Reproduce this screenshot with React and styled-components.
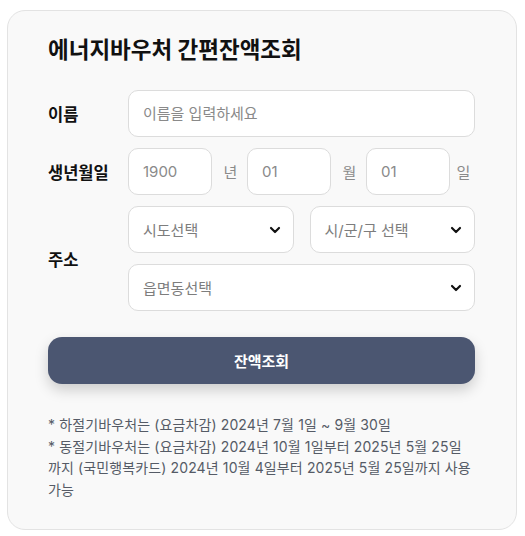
import styled, { createGlobalStyle } from "styled-components"
import { ChevronDown } from "lucide-react"

const GlobalStyle = createGlobalStyle`
body {
    margin: 0;
    background: #ffffff;
    font-family: Inter, "Noto Sans CJK KR", sans-serif;
}
`

const App = () => {
    return (
        <Page>
            <GlobalStyle />
            <Card>
                <Title>에너지바우처 간편잔액조회</Title>
                <Form>
                    <Row>
                        <Label>이름</Label>
                        <Input placeholder="이름을 입력하세요" />
                    </Row>
                    <Row>
                        <Label>생년월일</Label>
                        <DateGroup>
                            <Input placeholder="1900" />
                            <Unit>년</Unit>
                            <Input placeholder="01" />
                            <Unit>월</Unit>
                            <Input placeholder="01" />
                            <Unit>일</Unit>
                        </DateGroup>
                    </Row>
                    <Row>
                        <Label>주소</Label>
                        <AddressGrid>
                            <Select>
                                <span>시도선택</span>
                                <ChevronDown size={16} strokeWidth={3.2} color="#111" />
                            </Select>
                            <Select>
                                <span>시/군/구 선택</span>
                                <ChevronDown size={16} strokeWidth={3.2} color="#111" />
                            </Select>
                            <Select $wide>
                                <span>읍면동선택</span>
                                <ChevronDown size={16} strokeWidth={3.2} color="#111" />
                            </Select>
                        </AddressGrid>
                    </Row>
                </Form>
                <Button>잔액조회</Button>
                <Notes>
                    <p>* 하절기바우처는 (요금차감) 2024년 7월 1일 ~ 9월 30일</p>
                    <p>* 동절기바우처는 (요금차감) 2024년 10월 1일부터 2025년 5월 25일까지 (국민행복카드) 2024년 10월 4일부터 2025년 5월 25일까지 사용 가능</p>
                </Notes>
            </Card>
        </Page>
    )
}

const Page = styled.div`
padding: 10px 8px 7px 7px;
`
const Card = styled.div`
width: 510px;
box-sizing: border-box;
background-color: #f9f9f9;
border: 1px solid #e3e3e3;
border-radius: 18px;
padding: 24px 41px 29px 40px;
`
const Title = styled.h1`
margin: 0 0 25px;
font-size: 22.5px;
line-height: 30px;
font-weight: 700;
color: #111;
`
const Form = styled.div`
display: flex;
flex-direction: column;
gap: 11px;
`
const Row = styled.div`
display: grid;
grid-template-columns: 80px 1fr;
align-items: center;
`
const Label = styled.div`
font-size: 16.5px;
font-weight: 700;
color: #111;
`
const Input = styled.input`
width: 100%;
height: 47px;
box-sizing: border-box;
border: 1px solid #dcdcdc;
border-radius: 10px;
background: #fff;
padding: 0 14px;
font-family: inherit;
font-size: 15px;
outline: none;
&::placeholder {
    color: #8a8a8a;
}
`
const DateGroup = styled.div`
display: grid;
grid-template-columns: 84px 35px 84px 35px 84px 25px;
align-items: center;
`
const Unit = styled.span`
font-size: 15px;
color: #8a8a8a;
text-align: center;
padding-left: 2px;
`
const AddressGrid = styled.div`
display: grid;
grid-template-columns: 1fr 1fr;
gap: 11px 16px;
`
const Select = styled.div`
grid-column: ${(p) => (p.$wide ? "1 / span 2" : "auto")};
height: 47px;
box-sizing: border-box;
border: 1px solid #dcdcdc;
border-radius: 10px;
background: #fff;
padding: 0 10px 0 14px;
display: flex;
align-items: center;
justify-content: space-between;
font-size: 15px;
color: #7d7d7d;
`
const Button = styled.button`
display: block;
width: 100%;
height: 47px;
margin-top: 26px;
border: none;
border-radius: 14px;
background-color: #4b5671;
color: #fff;
font-family: inherit;
font-size: 15px;
font-weight: 700;
box-shadow: 0 6px 14px rgba(0, 0, 0, 0.18);
`
const Notes = styled.div`
margin-top: 30px;
padding-right: 2px;
font-size: 14px;
line-height: 21.5px;
letter-spacing: 0.12px;
color: #555b66;
p {
    margin: 0;
}
`

export default App
